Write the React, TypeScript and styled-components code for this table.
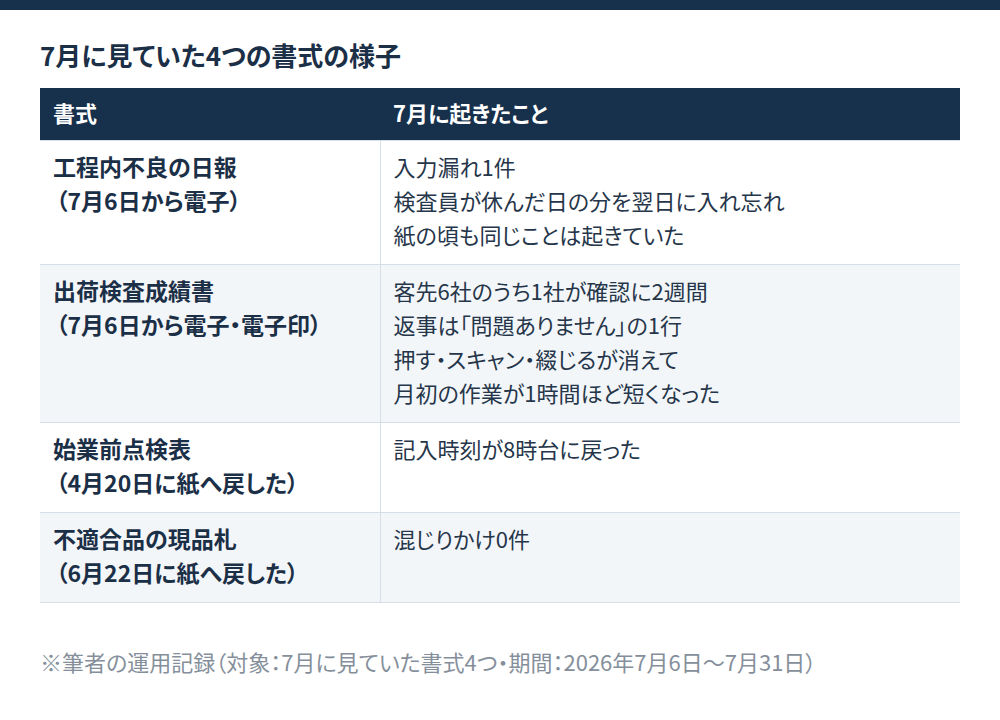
import React from 'react';
import styled, { createGlobalStyle } from 'styled-components';

interface FormRow {
  name: string;
  note: string;
  events: string[];
}

const rows: FormRow[] = [
  {
    name: '工程内不良の日報',
    note: '（7月6日から電子）',
    events: ['入力漏れ1件', '検査員が休んだ日の分を翌日に入れ忘れ', '紙の頃も同じことは起きていた'],
  },
  {
    name: '出荷検査成績書',
    note: '（7月6日から電子・電子印）',
    events: [
      '客先6社のうち1社が確認に2週間',
      '返事は「問題ありません」の1行',
      '押す・スキャン・綴じるが消えて',
      '月初の作業が1時間ほど短くなった',
    ],
  },
  {
    name: '始業前点検表',
    note: '（4月20日に紙へ戻した）',
    events: ['記入時刻が8時台に戻った'],
  },
  {
    name: '不適合品の現品札',
    note: '（6月22日に紙へ戻した）',
    events: ['混じりかけ0件'],
  },
];

const GlobalStyle = createGlobalStyle`
  body {
    margin: 0;
    background: #ffffff;
    font-family: "Noto Sans CJK JP", "Noto Sans", sans-serif;
    font-feature-settings: "palt";
    color: #223246;
  }
`;

const TopBar = styled.div`
  height: 10px;
  background: #17304c;
`;

const Page = styled.main`
  padding: 28px 40px 0;
`;

const Title = styled.h1`
  margin: 0 0 16px;
  font-size: 26px;
  line-height: 34px;
  font-weight: 700;
  color: #1b2f47;
`;

const Table = styled.table`
  width: 100%;
  border-collapse: collapse;
  table-layout: fixed;
`;

const HeadCell = styled.th<{ $width?: number }>`
  box-sizing: border-box;
  width: ${(p) => (p.$width ? `${p.$width}px` : 'auto')};
  background: #17304c;
  color: #ffffff;
  text-align: left;
  font-size: 22px;
  font-weight: 700;
  line-height: 34px;
  padding: 7px 13px 11px;
  border-bottom: 1px solid #d6dee8;
`;

const Row = styled.tr<{ $shaded: boolean }>`
  background: ${(p) => (p.$shaded ? '#f3f6f9' : '#ffffff')};
`;

const Cell = styled.td<{ $strong?: boolean }>`
  vertical-align: top;
  font-size: ${(p) => (p.$strong ? 23 : 22)}px;
  line-height: 34px;
  padding: 8px 13px 13px;
  font-weight: ${(p) => (p.$strong ? 700 : 400)};
  color: ${(p) => (p.$strong ? '#1b2f47' : '#26364a')};
  border-bottom: 1px solid #d6dee8;

  & + & {
    border-left: 1px solid #d6dee8;
  }
`;

const Line = styled.div`
  white-space: nowrap;
`;

const Note = styled.div`
  white-space: nowrap;
  padding-left: 3px;
`;

const Footnote = styled.p`
  margin: 41px 0 0;
  font-size: 22px;
  line-height: 34px;
  color: #858f9b;
`;

export default function App() {
  return (
    <>
      <GlobalStyle />
      <TopBar />
      <Page>
        <Title>7月に見ていた4つの書式の様子</Title>
        <Table>
          <thead>
            <tr>
              <HeadCell $width={340}>書式</HeadCell>
              <HeadCell>7月に起きたこと</HeadCell>
            </tr>
          </thead>
          <tbody>
            {rows.map((row, i) => (
              <Row key={row.name} $shaded={i % 2 === 1}>
                <Cell $strong>
                  <Line>{row.name}</Line>
                  <Note>{row.note}</Note>
                </Cell>
                <Cell>
                  {row.events.map((e) => (
                    <Line key={e}>{e}</Line>
                  ))}
                </Cell>
              </Row>
            ))}
          </tbody>
        </Table>
        <Footnote>※筆者の運用記録（対象：7月に見ていた書式4つ・期間：2026年7月6日〜7月31日）</Footnote>
      </Page>
    </>
  );
}
